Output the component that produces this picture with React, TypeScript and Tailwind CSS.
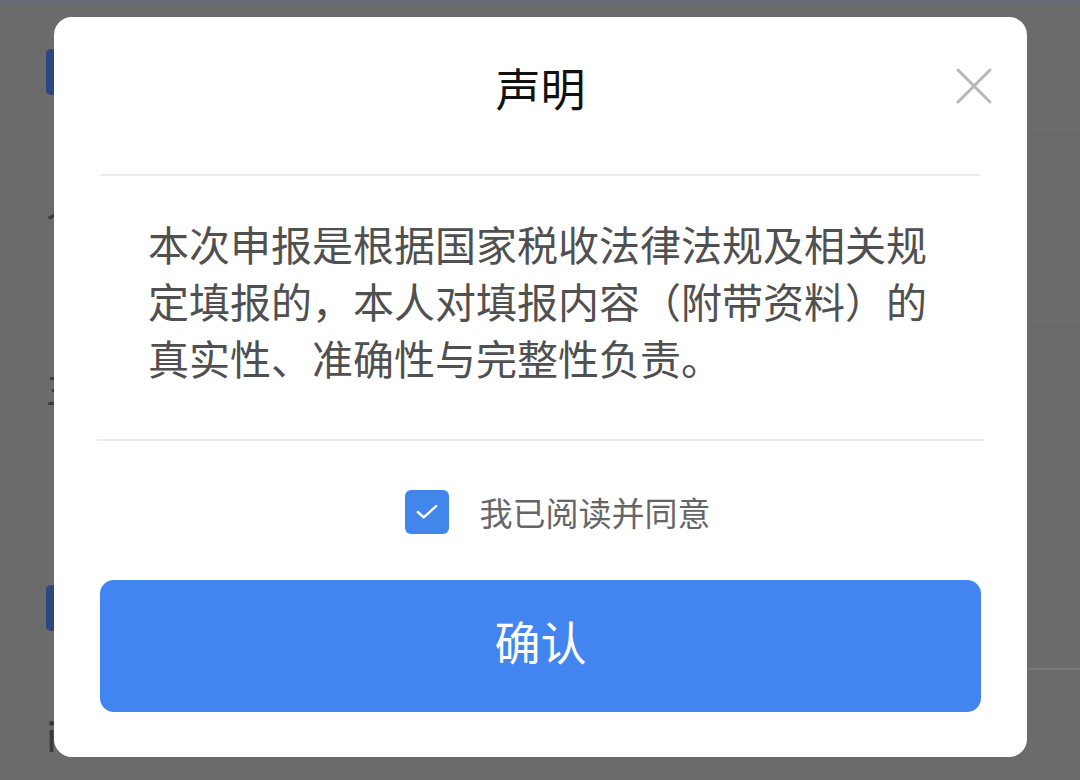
import React from 'react';

const font = { fontFamily: '"Noto Sans CJK SC", "Noto Sans", sans-serif' };

const App: React.FC = () => {
  return (
    <div className="relative w-[1080px] h-[780px] overflow-hidden bg-[#6b6b6b]" style={font}>
      {/* Page behind the dialog (dimmed) */}
      <div className="flex flex-col">
        <div className="h-[4px] bg-[#6a6a78]" />
        <div className="flex flex-col pl-[46px] pt-[45px]">
          <div className="h-[46px] w-[40px] rounded-[5px] bg-[#2c4780]" />
          <div className="mt-[95px] flex items-center justify-between pr-[10px]">
            <span className="text-[40px] leading-[56px] text-[#3b3b3b]">个</span>
          </div>
          <div className="mt-[112px] text-[40px] leading-[56px] text-[#3b3b3b]">主</div>
          <div className="mt-[171px] h-[46px] w-[40px] rounded-[5px] bg-[#2c4780]" />
          <div className="mt-[76px] text-[40px] leading-[56px] text-[#3b3b3b]">i</div>
        </div>
      </div>
      <div className="absolute right-0 top-[668px] h-[2px] w-[60px] bg-[#787878]" />
      <div className="absolute right-0 top-[128px] h-[1px] w-[60px] bg-[#707070]" />
      <div className="absolute right-0 top-[320px] h-[1px] w-[60px] bg-[#707070]" />

      {/* Dialog */}
      <div className="absolute left-[54px] top-[17px] flex h-[740px] w-[973px] flex-col rounded-[18px] bg-white">
        <div className="relative flex h-[140px] items-center justify-center">
          <h2 className="text-[45px] font-normal leading-none text-[#111111]">声明</h2>
          <button className="absolute right-[34px] top-[50px] flex h-[38px] w-[38px] items-center justify-center">
            <svg width="38" height="38" viewBox="0 0 38 38" fill="none" stroke="#b8b8b8" strokeWidth="3" strokeLinecap="round">
              <path d="M3 3L35 35M35 3L3 35" />
            </svg>
          </button>
        </div>
        <div className="mx-[47px] mt-[17px] h-[2px] bg-[#ebebeb]" />

        <p className="w-[880px] pl-[94px] pt-[39px] pb-[53px] text-[41px] leading-[57px] text-[#505050]">
          本次申报是根据国家税收法律法规及相关规定填报的，本人对填报内容（附带资料）的真实性、准确性与完整性负责。
        </p>

        <div className="mx-[43px] h-[2px] bg-[#ebebeb]" />

        <div className="flex items-center justify-center gap-[31px] pl-[34px] pt-[49px]">
          <span className="flex h-[44px] w-[44px] shrink-0 items-center justify-center rounded-[6px] bg-[#4286ec]">
            <svg className="h-[26px] w-[26px]" viewBox="0 0 24 24" fill="none" stroke="white" strokeWidth="2.2" strokeLinecap="round" strokeLinejoin="round">
              <path d="M3.5 12l5.5 5L20.5 6.5" />
            </svg>
          </span>
          <span className="text-[33px] leading-[44px] text-[#666666]">我已阅读并同意</span>
        </div>

        <button className="mx-[46px] mt-[46px] flex h-[132px] items-center justify-center rounded-[14px] bg-[#4385f0] pb-[12px] text-[46px] text-white">
          确认
        </button>
      </div>
    </div>
  );
};

export default App;
